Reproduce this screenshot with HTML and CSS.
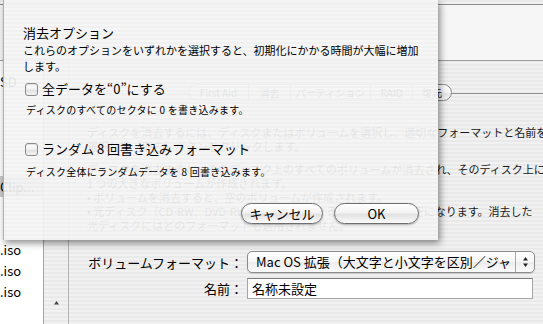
FILE: index.html
```html
<!DOCTYPE html>
<html lang="ja">
<head>
  <meta charset="UTF-8">
  <title>ディスクユーティリティ - 消去オプション</title>
  <link rel="stylesheet" href="styles.css">
</head>
<body>

  <div class="window">
    <div class="titlestrip"></div>
    <div class="toolbar"></div>

    <div class="main">
      <ul class="sidebar">
        <li>SD</li>
        <li></li>
        <li></li>
        <li></li>
        <li></li>
        <li class="selected">Clip...</li>
        <li></li>
        <li></li>
        <li>.iso</li>
        <li>.iso</li>
        <li>.iso</li>
      </ul>

      <div class="divider">
        <svg width="5" height="4" viewBox="0 0 5 4"><polygon points="2.5,0 5,3.5 0,3.5" fill="#444"/></svg>
      </div>

      <div class="pane">
        <div class="tabbox">
          <div class="segmented">
            <span class="seg-firstaid">First Aid</span>
            <span class="seg-erase">消去</span>
            <span class="seg-partition">パーティション</span>
            <span class="seg-raid">RAID</span>
            <span class="seg-restore">復元</span>
          </div>

          <div class="help">
            <p>ディスクを消去するには、ディスクまたはボリュームを選択し、適切なフォーマットと名前を<br>選択して［消去］ボタンをクリックします。</p>
            <p>ディスクを消去すると、そのディスク上のすべてのボリュームが消去され、そのディスク上に<br>1 つの大きなボリュームが作成されます。<br>• ボリュームを消去すると、空のボリュームが作成されます。<br>• 光ディスク（CD-RW、DVD-RW など）を消去すると、ディスクが空になります。消去した<br>光ディスクにはどのフォーマットも適用されません。</p>
          </div>

          <div class="form">
            <div class="form-row">
              <label>ボリュームフォーマット：</label>
              <div class="popup">
                <span class="popup-text">Mac OS 拡張（大文字と小文字を区別／ジャ</span>
                <span class="popup-arrows">
                  <svg width="7" height="12" viewBox="0 0 7 12">
                    <polygon points="3.5,1 6,4.5 1,4.5" fill="#222"/>
                    <polygon points="1,7.5 6,7.5 3.5,11" fill="#222"/>
                  </svg>
                </span>
              </div>
            </div>
            <div class="form-row">
              <label>名前：</label>
              <div class="field">名称未設定</div>
            </div>
          </div>
        </div>
      </div>
    </div>

    <div class="sheet">
      <div class="sheet-title">消去オプション</div>
      <div class="sheet-desc">これらのオプションをいずれかを選択すると、初期化にかかる時間が大幅に増加<br>します。</div>

      <div class="option">
        <span class="checkbox"></span>
        <span class="option-label">全データを“0”にする</span>
      </div>
      <div class="option-note">ディスクのすべてのセクタに 0 を書き込みます。</div>

      <div class="option option-second">
        <span class="checkbox"></span>
        <span class="option-label">ランダム 8 回書き込みフォーマット</span>
      </div>
      <div class="option-note">ディスク全体にランダムデータを 8 回書き込みます。</div>

      <div class="buttons">
        <button class="btn btn-cancel">キャンセル</button>
        <button class="btn btn-ok">OK</button>
      </div>
    </div>
  </div>

</body>
</html>
```

FILE: styles.css
```css
* {
  margin: 0;
  padding: 0;
  box-sizing: border-box;
}
body {
  font-family: "Noto Sans CJK JP", "Liberation Sans", sans-serif;
  color: #000;
  overflow: hidden;
}

.window {
  position: relative;
  width: 543px;
  height: 324px;
  overflow: hidden;
  background: repeating-linear-gradient(to bottom, #e9e9e9 0 2px, #f1f1f1 2px 4px);
}

.titlestrip {
  height: 4px;
}
.toolbar {
  height: 57px;
  background: #f6f6f6;
  border-top: 1px solid #8a8a8a;
  border-bottom: 1px solid #9c9c9c;
}

.main {
  display: flex;
  height: 263px;
}

/* source list */
.sidebar {
  list-style: none;
  width: 44px;
  flex-shrink: 0;
  background: #fff;
  border-right: 1px solid #a4a4a4;
  padding-top: 10px;
  overflow: hidden;
}
.sidebar li {
  height: 21px;
  line-height: 21px;
  font-size: 13px;
  white-space: nowrap;
}
.sidebar li.selected {
  background: #cbcbcb;
}

.divider {
  width: 25px;
  flex-shrink: 0;
  border-right: 1px solid #b4b4b4;
  display: flex;
  flex-direction: column;
  justify-content: flex-end;
  align-items: center;
  padding-bottom: 19px;
}

.pane {
  flex: 1;
  overflow: hidden;
}
.tabbox {
  margin-top: 32px;
  border-top: 1px solid #8e8e8e;
}

.segmented {
  display: flex;
  width: 264px;
  height: 17px;
  margin: -10px 0 0 119px;
  border: 1px solid #8a8a8a;
  border-radius: 9px;
  background: linear-gradient(#ffffff, #f4f4f4 50%, #e4e4e4 51%, #f7f7f7);
  overflow: hidden;
}
.segmented span {
  font-size: 10px;
  line-height: 15px;
  text-align: center;
  color: #222;
  border-right: 1px solid #a8a8a8;
}
.segmented span:last-child {
  border-right: none;
}
.seg-firstaid { width: 60px; }
.seg-erase { width: 42px; }
.seg-partition { width: 80px; }
.seg-raid { width: 42px; }
.seg-restore { width: 38px; }

.help {
  margin-top: 24px;
  padding-left: 18px;
  font-size: 11px;
  line-height: 14px;
  color: #1a1a1a;
  white-space: nowrap;
}
.help p + p {
  margin-top: 9px;
}

.form {
  margin-top: 19px;
}
.form-row {
  display: flex;
  align-items: center;
}
.form-row + .form-row {
  margin-top: 5px;
}
.form-row label {
  width: 174px;
  margin-right: 4px;
  text-align: right;
  font-size: 13px;
}

.popup {
  display: flex;
  width: 288px;
  height: 22px;
  border: 1px solid #8c8c8c;
  border-radius: 5px;
  background: linear-gradient(#ffffff, #f6f6f6 50%, #ececec 51%, #fbfbfb);
  box-shadow: 0 1px 1px rgba(0, 0, 0, 0.15);
  overflow: hidden;
}
.popup-text {
  flex: 1;
  padding-left: 8px;
  font-size: 13px;
  line-height: 20px;
  white-space: nowrap;
  overflow: hidden;
}
.popup-arrows {
  width: 19px;
  border-left: 1px solid #a8a8a8;
  display: flex;
  justify-content: center;
  align-items: center;
}

.field {
  width: 286px;
  height: 21px;
  border: 1px solid #a6a6a6;
  border-top-color: #7a7a7a;
  background: #fff;
  padding-left: 4px;
  font-size: 13px;
  line-height: 19px;
}

/* erase options sheet */
.sheet {
  position: absolute;
  left: 3px;
  top: 0;
  width: 435px;
  height: 240px;
  padding: 25px 19px 0 19px;
  border-left: 1px solid #b2b2b2;
  background: repeating-linear-gradient(to bottom, rgba(246, 246, 246, 0.93) 0 2px, rgba(240, 240, 240, 0.93) 2px 4px);
  box-shadow: 2px 3px 7px rgba(0, 0, 0, 0.45);
}
.sheet-title {
  font-size: 13px;
  line-height: 16px;
}
.sheet-desc {
  margin-top: 1px;
  font-size: 11px;
  line-height: 16px;
}

.option {
  display: flex;
  align-items: center;
  height: 16px;
  margin-top: 7px;
  padding-left: 2px;
}
.option-second {
  margin-top: 24px;
}
.checkbox {
  width: 13px;
  height: 13px;
  border: 1px solid #8a8a8a;
  border-radius: 3px;
  background: linear-gradient(#ffffff, #f0f0f0 50%, #dedede 51%, #f5f5f5);
  box-shadow: inset 0 1px 1px rgba(0, 0, 0, 0.12);
}
.option-label {
  margin-left: 4px;
  font-size: 13px;
  line-height: 16px;
}
.option-note {
  margin-top: 6px;
  padding-left: 3px;
  font-size: 10px;
  line-height: 14px;
  letter-spacing: 0.25px;
}
.option-second + .option-note {
  margin-top: 8px;
}

.buttons {
  display: flex;
  justify-content: flex-end;
  gap: 11px;
  margin-top: 24px;
}
.btn {
  height: 21px;
  border: 1px solid #6e6e6e;
  border-radius: 11px;
  background: linear-gradient(#ffffff, #f3f3f3 45%, #e2e2e2 55%, #fbfbfb);
  box-shadow: 0 1px 2px rgba(0, 0, 0, 0.3);
  font-family: inherit;
  font-size: 13px;
  line-height: 19px;
  color: #000;
}
.btn-cancel { width: 82px; }
.btn-ok { width: 85px; }
```
